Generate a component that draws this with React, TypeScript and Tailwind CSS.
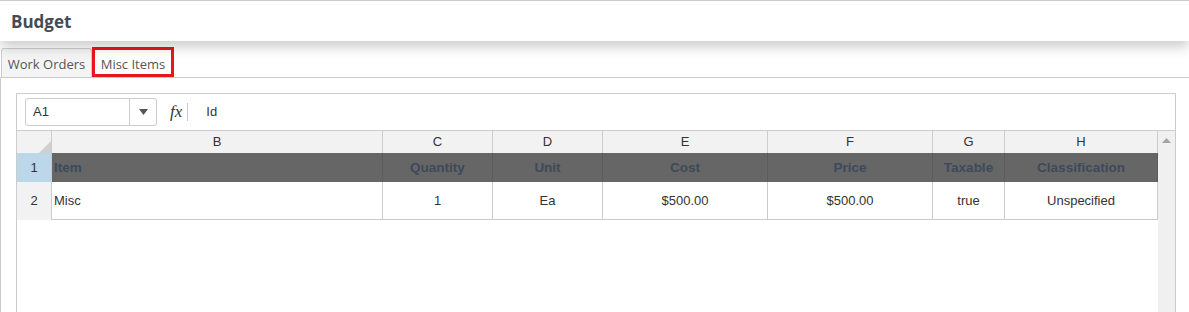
import React from "react";

const columns = [
  { letter: "B", w: "w-[331px]", title: "Item", value: "Misc", left: true },
  { letter: "C", w: "w-[110px]", title: "Quantity", value: "1" },
  { letter: "D", w: "w-[110px]", title: "Unit", value: "Ea" },
  { letter: "E", w: "w-[165px]", title: "Cost", value: "$500.00" },
  { letter: "F", w: "w-[165px]", title: "Price", value: "$500.00" },
  { letter: "G", w: "w-[72px]", title: "Taxable", value: "true" },
  { letter: "H", w: "w-[153px]", title: "Classification", value: "Unspecified" },
];

export default function App() {
  return (
    <div className="w-[1189px] h-[312px] overflow-hidden bg-white font-['Open_Sans',sans-serif]">
      {/* Header */}
      <div className="relative z-10 h-[41px] border-t border-[#cccccc] bg-white shadow-[0_6px_12px_rgba(0,0,0,0.2)] flex items-center px-[11px]">
        <h1 className="text-[17px] font-bold text-[#444b52] leading-none pt-[1px]">Budget</h1>
      </div>

      {/* Tabs */}
      <div className="flex items-end h-[37px] border-b border-[#cccccc] pl-[1px]">
        <div className="h-[29px] w-[91px] flex items-center justify-center pt-[3px] bg-[#f4f4f4] border border-b-0 border-[#cccccc] rounded-t-[3px] text-[13px] text-[#555]">
          Work Orders
        </div>
        <div className="h-[30px] w-[82px] flex items-center justify-center pt-[6px] bg-white border-[3px] border-[#e8161e] text-[13px] text-[#555]">
          Misc Items
        </div>
      </div>

      {/* Content */}
      <div className="border-l border-[#cccccc] pl-[15px] pt-[15px] h-[300px]">
        <div className="w-[1160px] h-[260px] border border-[#cccccc] flex flex-col font-['Liberation_Sans',Arial,sans-serif]">
          {/* Formula bar */}
          <div className="h-[37px] border-b border-[#cccccc] flex items-center pl-[8px] shrink-0">
            <div className="w-[132px] h-[28px] border border-[#cccccc] rounded-[3px] flex items-center">
              <span className="flex-1 pl-[7px] text-[13px] text-[#333]">A1</span>
              <div className="w-[27px] h-full border-l border-[#cccccc] flex items-center justify-center">
                <svg width="9" height="6" viewBox="0 0 9 6">
                  <path d="M0 0 L9 0 L4.5 6 Z" fill="#555" />
                </svg>
              </div>
            </div>
            <span className="ml-[13px] font-['Liberation_Serif',serif] italic text-[17px] text-[#333]">fx</span>
            <div className="ml-[5px] w-px h-[18px] bg-[#cccccc]" />
            <span className="ml-[18px] text-[13px] text-[#333]">Id</span>
          </div>

          {/* Grid */}
          <div className="flex flex-1">
            <div className="flex flex-col">
              {/* Column header */}
              <div className="flex h-[22px] bg-[#f2f2f2] text-[13px] text-[#333]">
                <div className="relative w-[35px] border-r border-[#cccccc]">
                  <svg className="absolute right-0 bottom-0" width="12" height="12" viewBox="0 0 12 12">
                    <path d="M12 0 L12 12 L0 12 Z" fill="#cfcfcf" />
                  </svg>
                </div>
                {columns.map((c) => (
                  <div key={c.letter} className={`${c.w} border-r border-[#cccccc] flex items-center justify-center`}>
                    {c.letter}
                  </div>
                ))}
              </div>

              {/* Row 1 */}
              <div className="flex h-[29px] text-[13.5px]">
                <div className="w-[35px] bg-[#bcd6ea] border-r border-[#cccccc] flex items-center justify-center text-[#333] text-[13px]">
                  1
                </div>
                {columns.map((c) => (
                  <div
                    key={c.letter}
                    className={`${c.w} bg-[#666666] border-r border-[#5c5c5c] flex items-center pt-[1px] font-bold text-[#3c4a5b] ${c.left ? "justify-start pl-[2px]" : "justify-center"}`}
                  >
                    {c.title}
                  </div>
                ))}
              </div>

              {/* Row 2 */}
              <div className="flex h-[38px] text-[13px] text-[#333]">
                <div className="w-[35px] bg-[#f2f2f2] border-r border-[#cccccc] flex items-center justify-center">
                  2
                </div>
                {columns.map((c) => (
                  <div
                    key={c.letter}
                    className={`${c.w} border-r border-b border-[#cccccc] flex items-center pt-[1px] ${c.left ? "justify-start pl-[2px]" : "justify-center"}`}
                  >
                    {c.value}
                  </div>
                ))}
              </div>
            </div>

            {/* Scrollbar */}
            <div className="w-[17px] ml-auto bg-[#f0f0f0] flex justify-center pt-[7px]">
              <svg width="9" height="5" viewBox="0 0 9 5">
                <path d="M0 5 L4.5 0 L9 5 Z" fill="#a3a3a3" />
              </svg>
            </div>
          </div>
        </div>
      </div>
    </div>
  );
}
